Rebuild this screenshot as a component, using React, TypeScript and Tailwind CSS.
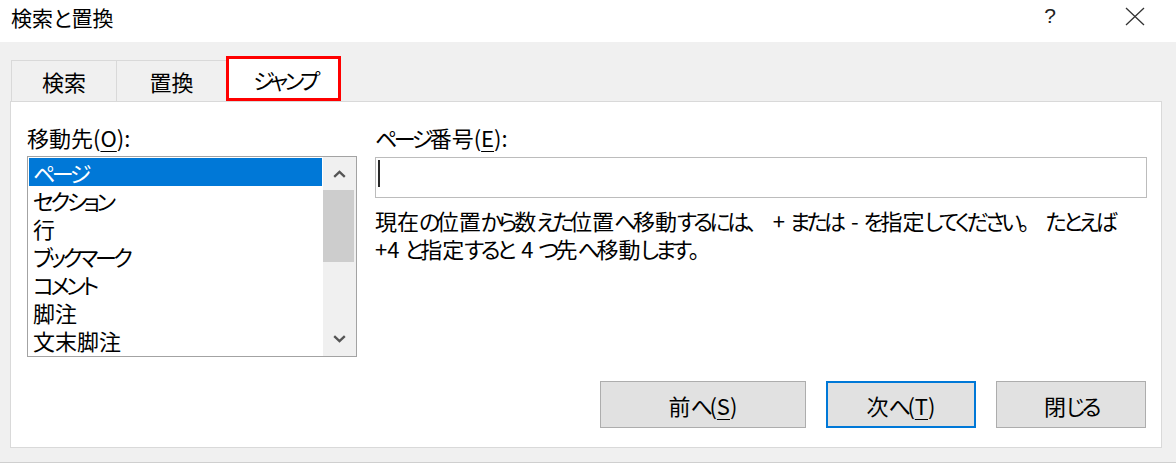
import React from "react";

const items = ["ページ", "セクション", "行", "ブックマーク", "コメント", "脚注", "文末脚注"];

const KANA = /^[\u3041-\u30ff]+$/;

function J({ t }: { t: string }) {
  const parts = t.split(/([\u3041-\u30ff]+|[、。])/).filter((p) => p.length > 0);
  return (
    <>
      {parts.map((p, i) => {
        if (/^[、。]$/.test(p))
          return (
            <span key={i} className="[font-feature-settings:normal]">
              {p}
            </span>
          );
        if (KANA.test(p)) {
          const next = parts[i + 1];
          if (next && next.startsWith(" ")) {
            return (
              <React.Fragment key={i}>
                <span className="tracking-[-3.5px]">{p.slice(0, -1)}</span>
                {p.slice(-1)}
              </React.Fragment>
            );
          }
          return (
            <span key={i} className="tracking-[-3.5px]">
              {p}
            </span>
          );
        }
        return <React.Fragment key={i}>{p}</React.Fragment>;
      })}
    </>
  );
}

function Chevron({ up }: { up?: boolean }) {
  return (
    <svg width="13" height="8" viewBox="0 0 13 8">
      <path
        d={up ? "M1.2 6.8 L6.5 1.8 L11.8 6.8" : "M1.2 1.2 L6.5 6.2 L11.8 1.2"}
        fill="none"
        stroke="#555"
        strokeWidth="2.3"
      />
    </svg>
  );
}

const U = ({ c }: { c: string }) => (
  <span className="underline underline-offset-[4px] decoration-1">{c}</span>
);

export default function App() {
  return (
    <div className="w-[1176px] h-[463px] bg-[#f0f0f0] flex flex-col overflow-hidden font-['Noto_Sans_CJK_JP',sans-serif] [font-feature-settings:'palt'] text-black">
      {/* Title bar */}
      <div className="h-[42px] bg-white flex items-start shrink-0">
        <div className="pl-[11px] pt-[3px] text-[21px] leading-[28px] whitespace-nowrap">検索と置換</div>
        <div className="ml-auto flex items-start mr-[18px]">
          <div className="w-[46px] text-center pt-[2px] text-[21px] leading-[28px] text-[#222] font-['Liberation_Sans',sans-serif]">
            ?
          </div>
          <div className="w-[39px]" />
          <div className="w-[46px] h-[32px] flex items-center justify-center">
            <svg width="20" height="19" viewBox="0 0 20 19">
              <path d="M1 1 L19 18 M19 1 L1 18" stroke="#333" strokeWidth="1.3" fill="none" />
            </svg>
          </div>
        </div>
      </div>

      {/* Tabs */}
      <div className="h-[59px] flex items-end pl-[11px] shrink-0">
        <div className="w-[106px] h-[41px] border-t border-l border-r border-[#d9d9d9] bg-[#f0f0f0] flex items-center justify-center text-[22px] leading-[28px]">
          検索
        </div>
        <div className="w-[109px] h-[41px] border-t border-[#d9d9d9] bg-[#f0f0f0] flex items-center justify-center text-[22px] leading-[28px]">
          置換
        </div>
        <div className="w-[115px] h-[45px] border-[3px] border-[#ff0000] bg-white flex items-center justify-center text-[22px] leading-[28px] pt-[1px] pl-[3px]">
          <J t="ジャンプ" />
        </div>
      </div>

      {/* Panel */}
      <div className="ml-[10px] w-[1152px] h-[347px] border border-[#d9d9d9] bg-white flex flex-col shrink-0">
        <div className="flex gap-[18px] pt-[21px] pl-[16px]">
          {/* Left column */}
          <div className="w-[330px] flex flex-col">
            <div className="text-[22px] leading-[28px] whitespace-nowrap">
              移動先(<U c="O" />):
            </div>
            <div className="mt-[5px] h-[201px] border border-[#a3a3a3] flex">
              <div className="flex-1 px-[1px] pt-[1px] flex flex-col">
                {items.map((it, i) => (
                  <div
                    key={it}
                    className={
                      i === 0
                        ? "h-[28px] pl-[4px] text-[22px] leading-[28px] whitespace-nowrap bg-[#0078d7] text-white"
                        : "h-[28px] pl-[4px] text-[22px] leading-[28px] whitespace-nowrap text-black"
                    }
                  >
                    <J t={it} />
                  </div>
                ))}
              </div>
              <div className="w-[33px] bg-[#f0f0f0] flex flex-col">
                <div className="h-[33px] flex items-center justify-center">
                  <Chevron up />
                </div>
                <div className="h-[72px] bg-[#cdcdcd] mr-[2px]" />
                <div className="flex-1" />
                <div className="h-[33px] flex items-center justify-center pb-[2px]">
                  <Chevron />
                </div>
              </div>
            </div>
          </div>

          {/* Right column */}
          <div className="w-[772px] flex flex-col">
            <div className="text-[22px] leading-[28px] whitespace-nowrap">
              <J t="ページ番号" />(<U c="E" />):
            </div>
            <div className="mt-[6px] h-[41px] border border-[#bcbcbc] flex items-start pl-[2px] pt-[2px]">
              <div className="w-[2px] h-[27px] bg-[#2a2a2a]" />
            </div>
            <div className="mt-[8px] text-[22px] leading-[28px]">
              <div className="whitespace-nowrap">
                <J t="現在の位置から数えた位置へ移動するには、 + または - を指定してください。 たとえば" />
              </div>
              <div className="whitespace-nowrap">
                <J t="+4 と指定すると 4 つ先へ移動します。" />
              </div>
            </div>
          </div>
        </div>

        {/* Buttons */}
        <div className="mt-auto flex justify-end gap-[20px] pr-[15px] pb-[19px]">
          <div className="w-[206px] h-[47px] bg-[#e1e1e1] border border-[#adadad] flex items-center justify-center text-[22px] leading-[28px] whitespace-nowrap">
            前<J t="へ" />(<U c="S" />)
          </div>
          <div className="w-[150px] h-[47px] bg-[#e1e1e1] border-2 border-[#0078d7] flex items-center justify-center text-[22px] leading-[28px] whitespace-nowrap">
            次<J t="へ" />(<U c="T" />)
          </div>
          <div className="w-[150px] h-[47px] bg-[#e1e1e1] border border-[#adadad] flex items-center justify-center text-[22px] leading-[28px] whitespace-nowrap">
            <J t="閉じる" />
          </div>
        </div>
      </div>

      <div className="flex-1 border-b border-[#cfcfcf]" />
    </div>
  );
}
